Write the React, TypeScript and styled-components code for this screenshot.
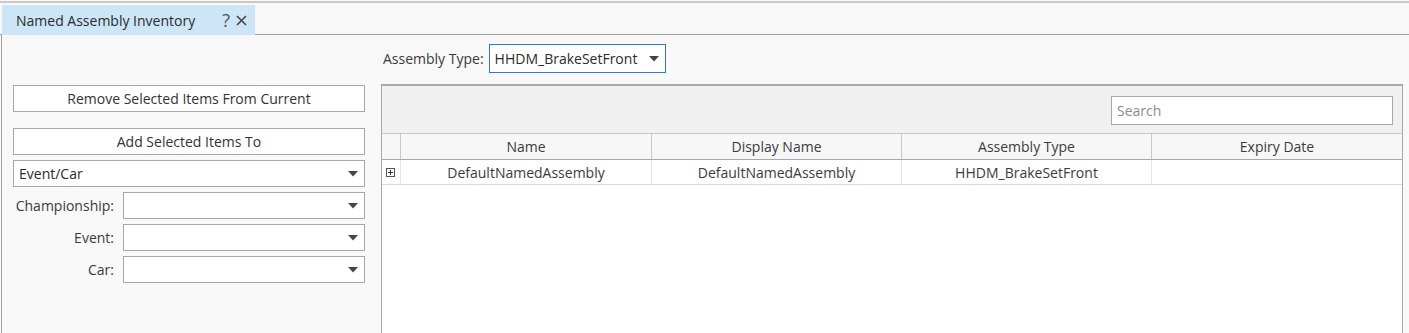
import React from "react";
import styled, { createGlobalStyle } from "styled-components";

const Global = createGlobalStyle`
  html, body { margin: 0; padding: 0; background: #f8f8f8; }
  body { font-family: "Open Sans", "Noto Sans", "Liberation Sans", sans-serif; color: #3b3b3b; }
  * { box-sizing: border-box; }
`;

const Window = styled.div`
  width: 1409px;
  height: 333px;
  background: #f8f8f8;
  display: flex;
  flex-direction: column;
  overflow: hidden;
`;

const TopRule = styled.div`
  height: 2px;
  margin-top: 1px;
  background: #c9c9c9;
  flex: none;
`;

const TabStrip = styled.div`
  height: 32px;
  display: flex;
  align-items: flex-end;
  border-bottom: 1px solid #a3a3a3;
  flex: none;
`;

const Tab = styled.div`
  margin-left: 2px;
  width: 253px;
  height: 30px;
  margin-bottom: -1px;
  background: #cde6f7;
  display: flex;
  align-items: center;
  padding-left: 14px;
  font-size: 14px;
  color: #2b2b2b;
`;

const TabTitle = styled.span`
  flex: 1;
`;

const TabIcons = styled.span`
  display: flex;
  align-items: center;
  gap: 6px;
  margin-right: 8px;
  color: #555;
`;

const Help = styled.span`
  font-size: 18px;
  line-height: 1;
`;

const Body = styled.div`
  flex: 1;
  margin-left: 1px;
  border-left: 1px solid #a3a3a3;
  display: grid;
  grid-template-columns: 352px 1fr;
  grid-template-rows: auto 1fr;
  column-gap: 16px;
  padding: 9px 6px 0 11px;
`;

const TopBar = styled.div`
  grid-column: 2;
  display: flex;
  align-items: center;
  gap: 5px;
  height: 29px;
  margin-bottom: 11px;
  margin-left: 2px;
`;

const Label = styled.span<{ $width?: number }>`
  font-size: 14px;
  color: #3b3b3b;
  ${(p) => (p.$width ? `width: ${p.$width}px; text-align: right; flex: none;` : "")}
`;

const Combo = styled.div<{ $active?: boolean; $width?: number; $grow?: boolean }>`
  height: ${(p) => (p.$active ? 29 : 27)}px;
  flex: ${(p) => (p.$grow ? "1" : "none")};
  ${(p) => (p.$width ? `width: ${p.$width}px;` : "")}
  background: #fff;
  border: 1px solid ${(p) => (p.$active ? "#2b79d0" : "#a8a8a8")};
  display: flex;
  align-items: center;
  padding: 0 6px 0 5px;
  font-size: 14px;
  color: #2b2b2b;
`;

const ComboText = styled.span`
  flex: 1;
`;

const Arrow = () => (
  <svg width="10" height="6" viewBox="0 0 10 6" style={{ flex: "none" }}>
    <path d="M0 0 H10 L5 5.5 Z" fill="#444" />
  </svg>
);

const LeftCol = styled.div`
  grid-column: 1;
  grid-row: 2;
  display: flex;
  flex-direction: column;
  padding-top: 1px;
`;

const Button = styled.div<{ $gap?: number }>`
  height: 27px;
  flex: none;
  background: #fff;
  border: 1px solid #a8a8a8;
  display: flex;
  align-items: center;
  justify-content: center;
  font-size: 14px;
  color: #333;
  margin-bottom: ${(p) => p.$gap ?? 0}px;
`;

const FieldRow = styled.div`
  display: flex;
  align-items: center;
  gap: 9px;
  margin-top: 5px;
`;

const Grid = styled.div`
  grid-column: 2;
  grid-row: 2;
  background: #fff;
  border: 1px solid #a8a8a8;
  border-top-width: 2px;
  border-bottom: none;
  display: flex;
  flex-direction: column;
`;

const GridToolbar = styled.div`
  height: 47px;
  background: #f0f0f0;
  display: flex;
  justify-content: flex-end;
  padding: 10px 9px 0 0;
`;

const Search = styled.div`
  width: 282px;
  height: 29px;
  background: #fff;
  border: 1px solid #a8a8a8;
  display: flex;
  align-items: center;
  padding-left: 5px;
  font-size: 14px;
  color: #8c8c8c;
`;

const Row = styled.div<{ $header?: boolean }>`
  display: grid;
  grid-template-columns: 19px 251px 250px 250px 1fr;
  height: ${(p) => (p.$header ? 27 : 25)}px;
  background: ${(p) => (p.$header ? "#f7f7f7" : "#fff")};
  border-top: ${(p) => (p.$header ? "1px solid #c8c8c8" : "none")};
  border-bottom: 1px solid ${(p) => (p.$header ? "#a8a8a8" : "#d9d9d9")};
`;

const Cell = styled.div<{ $header?: boolean; $last?: boolean }>`
  display: flex;
  align-items: center;
  justify-content: center;
  font-size: 14px;
  color: #3b3b3b;
  border-right: ${(p) => (p.$last ? "none" : `1px solid ${p.$header ? "#c8c8c8" : "#e3e3e3"}`)};
`;

const ExpandCell = styled(Cell)`
  justify-content: flex-start;
  padding-left: 4px;
`;

const Expander = () => (
  <svg width="9" height="9" viewBox="0 0 9 9">
    <rect x="0.5" y="0.5" width="8" height="8" fill="#fff" stroke="#555" />
    <path d="M2 4.5 H7 M4.5 2 V7" stroke="#333" />
  </svg>
);

const CloseIcon = () => (
  <svg width="11" height="11" viewBox="0 0 11 11">
    <path d="M1 1 L10 10 M10 1 L1 10" stroke="#444" strokeWidth="1.6" />
  </svg>
);

const columns = ["Name", "Display Name", "Assembly Type", "Expiry Date"];
const data = ["DefaultNamedAssembly", "DefaultNamedAssembly", "HHDM_BrakeSetFront", ""];

const fields = ["Championship:", "Event:", "Car:"];

export default function App() {
  return (
    <>
      <Global />
      <Window>
        <TopRule />
        <TabStrip>
          <Tab>
            <TabTitle>Named Assembly Inventory</TabTitle>
            <TabIcons>
              <Help>?</Help>
              <CloseIcon />
            </TabIcons>
          </Tab>
        </TabStrip>
        <Body>
          <TopBar>
            <Label>Assembly Type:</Label>
            <Combo $active $width={177}>
              <ComboText>HHDM_BrakeSetFront</ComboText>
              <Arrow />
            </Combo>
          </TopBar>
          <LeftCol>
            <Button $gap={16}>Remove Selected Items From Current</Button>
            <Button $gap={5}>Add Selected Items To</Button>
            <Combo>
              <ComboText>Event/Car</ComboText>
              <Arrow />
            </Combo>
            {fields.map((f) => (
              <FieldRow key={f}>
                <Label $width={101}>{f}</Label>
                <Combo $grow>
                  <ComboText />
                  <Arrow />
                </Combo>
              </FieldRow>
            ))}
          </LeftCol>
          <Grid>
            <GridToolbar>
              <Search>Search</Search>
            </GridToolbar>
            <Row $header>
              <Cell $header />
              {columns.map((c, i) => (
                <Cell $header key={c} $last={i === columns.length - 1}>
                  {c}
                </Cell>
              ))}
            </Row>
            <Row>
              <ExpandCell>
                <Expander />
              </ExpandCell>
              {data.map((d, i) => (
                <Cell key={i} $last={i === data.length - 1}>
                  {d}
                </Cell>
              ))}
            </Row>
          </Grid>
        </Body>
      </Window>
    </>
  );
}
